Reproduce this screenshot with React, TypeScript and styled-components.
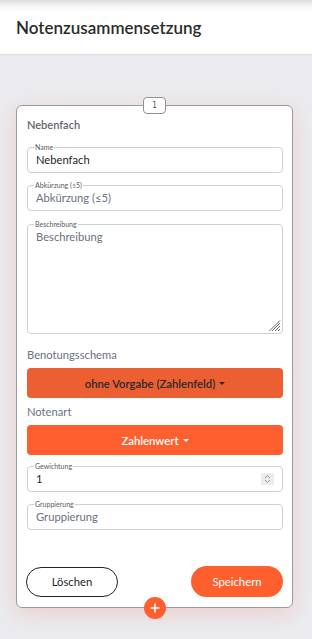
import React from "react";
import styled, { createGlobalStyle } from "styled-components";

const Global = createGlobalStyle`
  html, body { margin: 0; padding: 0; background: #ebebef; }
  body { font-family: Lato, "Noto Sans", sans-serif; }
  * { box-sizing: border-box; }
`;

const Page = styled.div`
  width: 312px;
  min-height: 639px;
  background: #ebebef;
  display: flex;
  flex-direction: column;
`;

const Header = styled.header`
  height: 55px;
  background: linear-gradient(to bottom, #dcdcdc 0px, #f4f4f4 6px, #ffffff 12px);
  border-bottom: 1px solid #dedee2;
  padding: 0 16px;
  display: flex;
  align-items: center;
`;

const Title = styled.h1`
  margin: 0;
  font-size: 17px;
  font-weight: 600;
  color: #2b2b2b;
`;

const Main = styled.main`
  padding: 50px 19px 0 16px;
`;

const Card = styled.section`
  position: relative;
  background: #fff;
  border: 1px solid #9a9a9e;
  border-radius: 6px;
  box-shadow: 0 6px 22px rgba(235, 110, 80, 0.22);
  padding: 11px 9px 10px 10px;
  display: flex;
  flex-direction: column;
`;

const Badge = styled.div`
  position: absolute;
  top: -9px;
  left: 126px;
  width: 23px;
  height: 17px;
  background: #fff;
  border: 1px solid #8e9196;
  border-radius: 4px;
  font-family: "DejaVu Sans Mono", monospace;
  font-size: 8px;
  color: #555;
  display: flex;
  align-items: center;
  justify-content: center;
`;

const CardTitle = styled.div`
  font-size: 11px;
  line-height: 16px;
  font-weight: 600;
  color: #62666b;
`;

const Field = styled.div<{ $mt: number; $h?: number }>`
  position: relative;
  margin-top: ${(p) => p.$mt}px;
  height: ${(p) => p.$h ?? 26}px;
  border: 1px solid #cdd0d5;
  border-radius: 4px;
  display: flex;
  align-items: ${(p) => (p.$h ? "flex-start" : "center")};
  padding: ${(p) => (p.$h ? "4px 8px" : "0 8px")};
`;

const Legend = styled.span`
  position: absolute;
  top: -5px;
  left: 6px;
  padding: 0 1px;
  background: #fff;
  font-size: 7px;
  line-height: 9px;
  color: #555a60;
`;

const Value = styled.span<{ $placeholder?: boolean }>`
  font-size: 11.2px;
  line-height: 16px;
  color: ${(p) => (p.$placeholder ? "#6b7280" : "#1f1f1f")};
  flex: 1;
`;

const Spinner = styled.span`
  width: 13px;
  height: 12px;
  background: #ececf0;
  display: flex;
  align-items: center;
  justify-content: center;
`;

const Resize = styled.svg`
  position: absolute;
  right: 1px;
  bottom: 1px;
`;

const SectionLabel = styled.div<{ $mt: number }>`
  margin-top: ${(p) => p.$mt}px;
  font-size: 11.2px;
  line-height: 16px;
  color: #6b7280;
`;

const Dropdown = styled.button<{ $dark?: boolean }>`
  margin-top: 5px;
  height: 30px;
  border: none;
  border-radius: 4px;
  background: ${(p) => (p.$dark ? "#eb5f33" : "#ff5f2f")};
  color: ${(p) => (p.$dark ? "#2a2a2a" : "#ffffff")};
  font-family: Lato, sans-serif;
  font-size: 11.3px;
  font-weight: 600;
  display: flex;
  align-items: center;
  justify-content: center;
  gap: 4px;
  &::after {
    content: "";
    border-left: 3px solid transparent;
    border-right: 3px solid transparent;
    border-top: 3px solid currentColor;
    margin-top: 1px;
  }
`;

const Actions = styled.div`
  margin-top: 36px;
  display: flex;
  justify-content: space-between;
  align-items: center;
`;

const Pill = styled.button<{ $primary?: boolean }>`
  width: 92px;
  height: ${(p) => (p.$primary ? 31 : 30)}px;
  margin-left: ${(p) => (p.$primary ? 0 : -1)}px;
  border-radius: 16px;
  border: ${(p) => (p.$primary ? "none" : "1px solid #222")};
  background: ${(p) => (p.$primary ? "#ff5f2f" : "#fff")};
  color: ${(p) => (p.$primary ? "#fff" : "#1f1f1f")};
  font-family: Lato, sans-serif;
  font-size: 11.3px;
  display: flex;
  align-items: center;
  justify-content: center;
`;

const AddButton = styled.button`
  position: absolute;
  bottom: -12px;
  left: 127px;
  width: 22px;
  height: 22px;
  border-radius: 50%;
  border: none;
  padding: 0;
  background: #ff5f2f;
  display: flex;
  align-items: center;
  justify-content: center;
`;

export default function App() {
  return (
    <Page>
      <Global />
      <Header>
        <Title>Notenzusammensetzung</Title>
      </Header>
      <Main>
        <Card>
          <Badge>1</Badge>
          <CardTitle>Nebenfach</CardTitle>
          <Field $mt={14}>
            <Legend>Name</Legend>
            <Value>Nebenfach</Value>
          </Field>
          <Field $mt={12}>
            <Legend>Abkürzung (≤5)</Legend>
            <Value $placeholder>Abkürzung (≤5)</Value>
          </Field>
          <Field $mt={13} $h={110}>
            <Legend>Beschreibung</Legend>
            <Value $placeholder>Beschreibung</Value>
            <Resize width="12" height="12" viewBox="0 0 12 12">
              <path d="M11 3L3 11M11 6L6 11M11 9L9 11M11 0.5L0.5 11" stroke="#555" strokeWidth="0.9" />
            </Resize>
          </Field>
          <SectionLabel $mt={13}>Benotungsschema</SectionLabel>
          <Dropdown $dark>ohne Vorgabe (Zahlenfeld)</Dropdown>
          <SectionLabel $mt={6}>Notenart</SectionLabel>
          <Dropdown>Zahlenwert</Dropdown>
          <Field $mt={11}>
            <Legend>Gewichtung</Legend>
            <Value>1</Value>
            <Spinner>
              <svg width="7" height="10" viewBox="0 0 7 10">
                <path d="M1 4L3.5 1.5L6 4M1 6L3.5 8.5L6 6" fill="none" stroke="#888" strokeWidth="0.9" />
              </svg>
            </Spinner>
          </Field>
          <Field $mt={12}>
            <Legend>Gruppierung</Legend>
            <Value $placeholder>Gruppierung</Value>
          </Field>
          <Actions>
            <Pill>Löschen</Pill>
            <Pill $primary>Speichern</Pill>
          </Actions>
          <AddButton aria-label="add">
            <svg width="10" height="10" viewBox="0 0 10 10">
              <path d="M5 0.5V9.5M0.5 5H9.5" stroke="#fff" strokeWidth="1.6" />
            </svg>
          </AddButton>
        </Card>
      </Main>
    </Page>
  );
}
